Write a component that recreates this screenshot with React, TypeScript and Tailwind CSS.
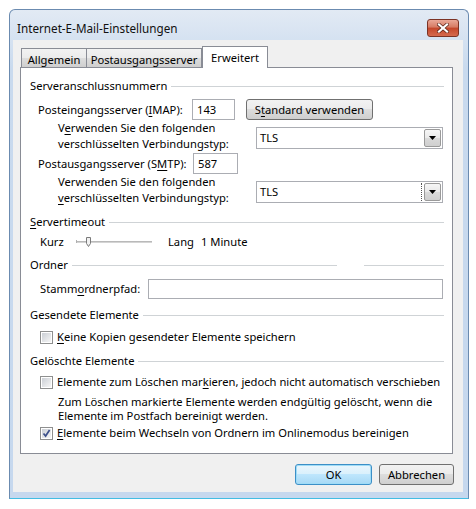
import React from "react";

const U = ({ children }: { children: React.ReactNode }) => (
  <span className="underline decoration-1 underline-offset-[2px]">{children}</span>
);

function GroupHeader({ children, split }: { children: React.ReactNode; split?: boolean }) {
  return (
    <div className="flex h-[16px] items-center">
      <span className="shrink-0 leading-[16px]">{children}</span>
      {split ? (
        <div className="ml-[4px] flex flex-1 items-center">
          <div className="h-px w-[265px] bg-[#cfd3d6]" />
          <div className="ml-[27px] h-px flex-1 bg-[#cfd3d6]" />
        </div>
      ) : (
        <div className="ml-[4px] h-px flex-1 bg-[#cfd3d6]" />
      )}
    </div>
  );
}

function Combo({ value, focused }: { value: string; focused?: boolean }) {
  return (
    <div className="flex h-[22px] w-[187px] items-center border border-[#abadb3] bg-white pl-[3px] pr-[1px]">
      <span className="flex-1 leading-[16px]">{value}</span>
      {focused && <div className="mr-[2px] h-[18px] border-l border-dotted border-[#555]" />}
      <div className="flex h-[18px] w-[17px] items-center justify-center rounded-[2px] border border-[#9a9a9a] bg-[linear-gradient(#f6f6f6,#e9e9e9_50%,#dadada_50%,#cfcfcf)]">
        <svg width="7" height="4" viewBox="0 0 7 4">
          <path d="M0 0h7L3.5 4z" fill="#000" />
        </svg>
      </div>
    </div>
  );
}

function TextBox({ value, w }: { value?: string; w: string }) {
  return (
    <div className={`flex h-[21px] items-center border border-[#abadb3] bg-white pl-[4px] ${w}`}>
      <span className="leading-[16px]">{value}</span>
    </div>
  );
}

function CheckBox({ checked }: { checked?: boolean }) {
  return (
    <div className="flex h-[13px] w-[13px] shrink-0 items-center justify-center border border-[#8e8f8f] bg-white p-px">
      <div className="relative h-full w-full bg-[linear-gradient(135deg,#cbcfd5,#f6f6f6)]">
        {checked && (
          <svg className="absolute left-0 top-0" width="9" height="9" viewBox="0 0 9 9">
            <path d="M1.5 4.5 L3.6 7 L7.6 1" fill="none" stroke="#3c4f8a" strokeWidth="1.7" />
          </svg>
        )}
      </div>
    </div>
  );
}

function Slider() {
  return (
    <svg width="80" height="14" viewBox="0 0 80 14">
      <rect x="2" y="6" width="75" height="2" fill="#d4d4d4" />
      <rect x="2" y="6" width="75" height="1" fill="#b9b9b9" />
      <rect x="1" y="5" width="1" height="3" fill="#b0b0b0" />
      <path d="M11.5 2.5 h4 v6 l-2 3 l-2 -3 z" fill="#f1f1f1" stroke="#7a7a7a" strokeWidth="1" />
    </svg>
  );
}

export default function App() {
  return (
    <div className="h-[509px] w-[476px] overflow-hidden bg-white pl-[9px] pt-[9px] font-['Noto_Sans',sans-serif] text-[11.2px] leading-[16px] text-black">
      <div className="flex h-[490px] w-[460px] flex-col rounded-t-[6px] border border-[#6b8bb0] border-b-[#43bde3] bg-[linear-gradient(#e2eaf4,#c9daee_12%,#c6d8ee)]">
        {/* title bar */}
        <div className="flex h-[30px] shrink-0 items-start justify-between pl-[7px] pr-[9px]">
          <span className="mt-[10px] text-[11.7px] leading-[16px] text-[#111]">Internet-E-Mail-Einstellungen</span>
          <div className="mt-[9px] flex h-[18px] w-[32px] items-center justify-center rounded-[3px] border border-[#7b3325] bg-[linear-gradient(#eaa897,#d67a63_45%,#c4462a_50%,#d56a4e)]">
            <svg width="12" height="10" viewBox="0 0 12 10">
              <path d="M2 1.5 L10 8.5 M10 1.5 L2 8.5" stroke="#5a2418" strokeWidth="3.6" strokeLinecap="square" />
              <path d="M2 1.5 L10 8.5 M10 1.5 L2 8.5" stroke="#fff" strokeWidth="2.2" strokeLinecap="square" />
            </svg>
          </div>
        </div>

        {/* client area */}
        <div className="ml-[3px] h-[452px] w-[450px] bg-[#f0f0f0] pl-[7px] pt-[6px]">
          {/* tabs */}
          <div className="flex h-[21px] items-end pl-px">
            <div className="flex h-[19px] w-[66px] justify-center border border-b-0 border-[#898c95] bg-[linear-gradient(#f2f2f2,#ebebeb_50%,#dddddd_50%,#cfcfcf)] pt-[3px]">
              Allgemein
            </div>
            <div className="flex h-[19px] w-[115px] justify-center border border-b-0 border-l-0 border-[#898c95] bg-[linear-gradient(#f2f2f2,#ebebeb_50%,#dddddd_50%,#cfcfcf)] pt-[3px]">
              Postausgangsserver
            </div>
            <div className="relative z-10 -mb-px flex h-[22px] w-[66px] justify-center border border-b-0 border-[#898c95] bg-white pt-[3px]">
              Erweitert
            </div>
          </div>

          {/* tab panel */}
          <div className="flex h-[387px] w-[433px] flex-col border border-[#898c95] bg-white pl-[9px] pr-[8px] pt-[10px]">
            <GroupHeader>Serveranschlussnummern</GroupHeader>

            <div className="mt-[5px] flex h-[21px] items-center pl-[8px]">
              <span className="w-[154px] shrink-0">
                Posteingangsserver (<U>I</U>MAP):
              </span>
              <TextBox value="143" w="w-[43px]" />
              <button className="ml-[11px] h-[21px] w-[127px] rounded-[3px] border border-[#707070] bg-[linear-gradient(#f2f2f2,#ebebeb_50%,#dddddd_50%,#cfcfcf)] leading-[16px]">
                S<U>t</U>andard verwenden
              </button>
            </div>

            <div className="flex h-[32px] items-start pl-[28px]">
              <div className="w-[198px] shrink-0 leading-[16px]">
                V<U>e</U>rwenden Sie den folgenden
                <br />
                verschlüsselten Verbindungstyp:
              </div>
              <div className="mt-[7px]">
                <Combo value="TLS" />
              </div>
            </div>

            <div className="mt-px flex h-[21px] items-center pl-[8px]">
              <span className="w-[155px] shrink-0">
                Postausgangsserver (S<U>M</U>TP):
              </span>
              <TextBox value="587" w="w-[45px]" />
            </div>

            <div className="flex h-[32px] items-start pl-[28px]">
              <div className="w-[198px] shrink-0 leading-[16px]">
                Verwenden Sie den folgenden
                <br />
                <U>v</U>erschlüsselten Verbindungstyp:
              </div>
              <div className="mt-[7px]">
                <Combo value="TLS" focused />
              </div>
            </div>

            <div className="mt-[8px]">
              <GroupHeader>
                <U>S</U>ervertimeout
              </GroupHeader>
            </div>

            <div className="mt-[4px] flex h-[16px] items-center pl-[10px]">
              <span className="w-[35px] shrink-0">Kurz</span>
              <Slider />
              <span className="ml-[13px] w-[33px] shrink-0">Lang</span>
              <span>1 Minute</span>
            </div>

            <div className="mt-[7px]">
              <GroupHeader split>Ordner</GroupHeader>
            </div>

            <div className="mt-[6px] flex h-[20px] items-center pl-[10px]">
              <span className="w-[108px] shrink-0">
                Stamm<U>o</U>rdnerpfad:
              </span>
              <div className="h-[20px] w-[295px] border border-[#abadb3] bg-white" />
            </div>

            <div className="mt-[8px]">
              <GroupHeader>Gesendete Elemente</GroupHeader>
            </div>

            <div className="mt-[6px] flex h-[16px] items-center pl-[10px]">
              <CheckBox />
              <span className="ml-[4px]">
                <U>K</U>eine Kopien gesendeter Elemente speichern
              </span>
            </div>

            <div className="mt-[8px]">
              <GroupHeader>Gelöschte Elemente</GroupHeader>
            </div>

            <div className="mt-[5px] flex h-[16px] items-center pl-[10px]">
              <CheckBox />
              <span className="ml-[4px] whitespace-nowrap">
                Elemente zum Löschen mar<U>k</U>ieren, jedoch nicht automatisch verschieben
              </span>
            </div>

            <div className="mt-[5px] whitespace-nowrap pl-[28px] leading-[14px]">
              Zum Löschen markierte Elemente werden endgültig gelöscht, wenn die
              <br />
              Elemente im Postfach bereinigt werden.
            </div>

            <div className="mt-[2px] flex h-[16px] items-center pl-[10px]">
              <CheckBox checked />
              <span className="ml-[4px] whitespace-nowrap">
                <U>E</U>lemente beim Wechseln von Ordnern im Onlinemodus bereinigen
              </span>
            </div>
          </div>

          {/* dialog buttons */}
          <div className="mt-[10px] flex w-[434px] justify-end gap-[7px]">
            <button className="h-[21px] w-[77px] rounded-[3px] border border-[#3c8fc7] bg-[linear-gradient(#eaf6fd,#d9f0fc_50%,#bee6fd_50%,#a7d9f5)] leading-[16px] shadow-[inset_0_0_0_1px_#9fdcf7]">
              OK
            </button>
            <button className="h-[21px] w-[75px] rounded-[3px] border border-[#707070] bg-[linear-gradient(#f2f2f2,#ebebeb_50%,#dddddd_50%,#cfcfcf)] leading-[16px]">
              Abbrechen
            </button>
          </div>
        </div>
      </div>
    </div>
  );
}
